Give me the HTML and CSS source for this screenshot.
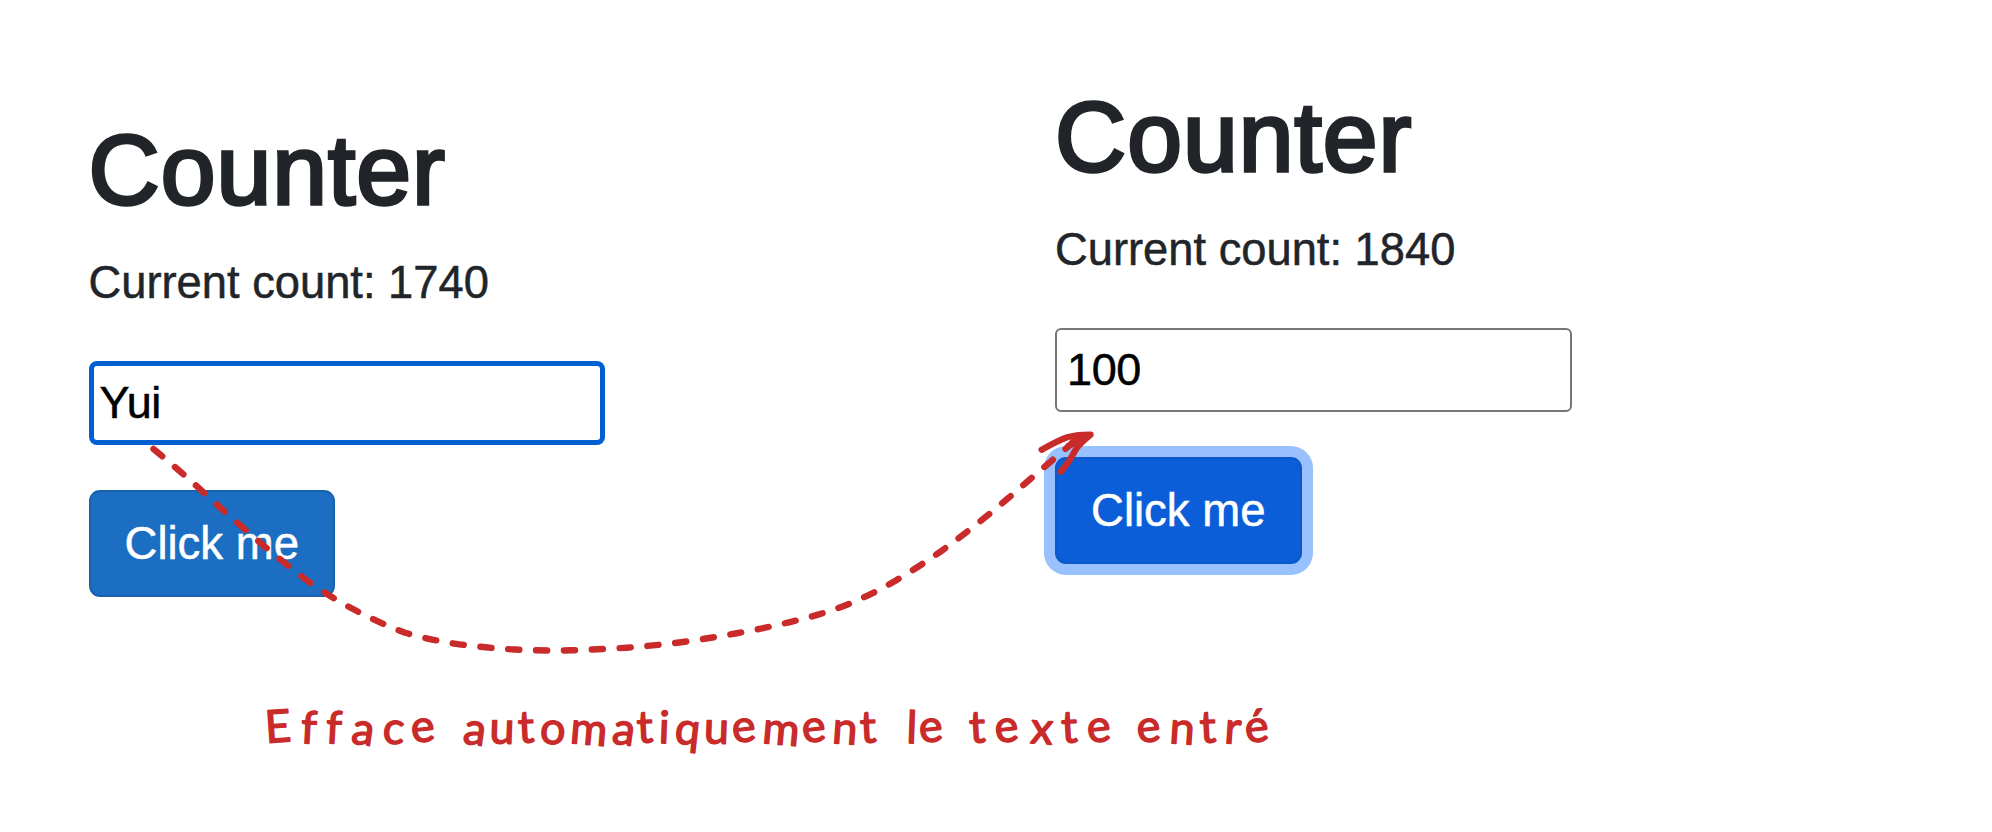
FILE: index.html
```html
<!DOCTYPE html>
<html lang="fr">
<head>
<meta charset="utf-8">
<title>Counter</title>
<link rel="stylesheet" href="styles.css">
</head>
<body>
<main class="stage">
  <section class="counter counter-before">
    <h1 class="title">Counter</h1>
    <p class="status">Current count: 1740</p>
    <div class="field field-focus">Yui</div>
    <button class="btn btn-idle">Click me</button>
  </section>
  <section class="counter counter-after">
    <h1 class="title">Counter</h1>
    <p class="status">Current count: 1840</p>
    <div class="field">100</div>
    <button class="btn btn-pressed">Click me</button>
  </section>
  <svg class="annotation" viewBox="0 0 1992 832">
    <path class="ink" pathLength="374" stroke-dasharray="4 6" d="M153.5 449Q179 470 199.7 488.9T220.4 507.7Q241.5 526.5 262.9 545Q284 563 306.4 580Q330 597 353.9 609.5Q379 623 405 632.7Q432 640.5 459.3 644.3Q487 648 515 649.5Q543 651 571 650.3Q599 649.5 627 647.7Q655 645.5 682.9 642Q711 638 738.2 633Q766 628 792.9 621.3Q820 615 846.4 605Q872 594.5 896.7 580Q921 565.5 943.7 549.3Q966 533 987.7 515.3L1009.3 497.3L1030.3 479L1051.7 460.7L1074 441.6"/>
    <path class="ink" d="M1041.7 449.7Q1060 439.5 1068 437Q1078 434.7 1090.5 434.8Q1079 444 1075.5 450Q1068 464 1060.7 471.7M1068.5 446L1088 435.5L1072 443"/>
    <g class="caption">
      <text x="266" y="743" rotate="-4 3 3 8 4 -6" textLength="170" lengthAdjust="spacing">Efface</text>
      <text x="462" y="743" rotate="8 2 -3 4 5 8 -3 2 6 2 -6 5 -6 4 -3" textLength="415" lengthAdjust="spacing">automatiquement</text>
      <text x="906" y="743" rotate="2 -6" textLength="38" lengthAdjust="spacing">le</text>
      <text x="970" y="743" rotate="-3 -6 4 -3 -6" textLength="142" lengthAdjust="spacing">texte</text>
      <text x="1138" y="743" rotate="-6 4 -3 4 -6" textLength="132" lengthAdjust="spacing">entré</text>
    </g>
  </svg>
</main>
</body>
</html>
```
FILE: styles.css
```css
* { box-sizing: border-box; }
body { margin: 0; background: #fff; color: #212529; font-family: "Helvetica Neue", "Liberation Sans", Arial, sans-serif; }
.stage { position: relative; display: grid; grid-template-columns: 966.5px 1fr; width: 1992px; height: 832px; padding-left: 88.5px; overflow: hidden; }
.counter { display: flex; flex-direction: column; align-items: flex-start; }
.counter-before { padding-top: 114px; }
.counter-after { padding-top: 81px; }
.title { margin: 0 0 23px; font-size: 98.5px; line-height: 112px; font-weight: 400; letter-spacing: 1px; -webkit-text-stroke: 3.4px #212529; }
.status { margin: 0 0 44px; font-size: 45.3px; line-height: 68px; -webkit-text-stroke: 0.5px #212529; }
.field { width: 516.5px; height: 84px; margin-bottom: 45px; padding: 0 10px; border: 2.5px solid #767676; border-radius: 6px; background: #fff; color: #000; font-size: 45px; line-height: 79px; letter-spacing: -0.4px; -webkit-text-stroke: 0.5px #000; }
.field-focus { padding: 0 6px; border: 5px solid #0060d1; border-radius: 8px; line-height: 74px; }
.btn { width: 246.5px; height: 106.5px; padding: 0; border: 2px solid; border-radius: 11px; color: #fff; font: inherit; font-size: 45.5px; line-height: 103px; white-space: nowrap; -webkit-text-stroke: 0.5px #fff; }
.btn-idle { background: #1b6ec2; border-color: #1861ac; }
.btn-pressed { background: #0b5ed7; border-color: #0a58ca; box-shadow: 0 0 0 11px #98c1fe; }
.annotation { position: absolute; inset: 0; width: 1992px; height: 832px; }
.ink { fill: none; stroke: #c92a2a; stroke-width: 6.4; stroke-linecap: round; stroke-linejoin: round; }
.caption { fill: #c92a2a; stroke: #c92a2a; stroke-width: 1.4; stroke-linejoin: round; font-family: Virgil, "Comic Sans MS", Lato, sans-serif; font-size: 45px; font-variant-ligatures: none; }
```
